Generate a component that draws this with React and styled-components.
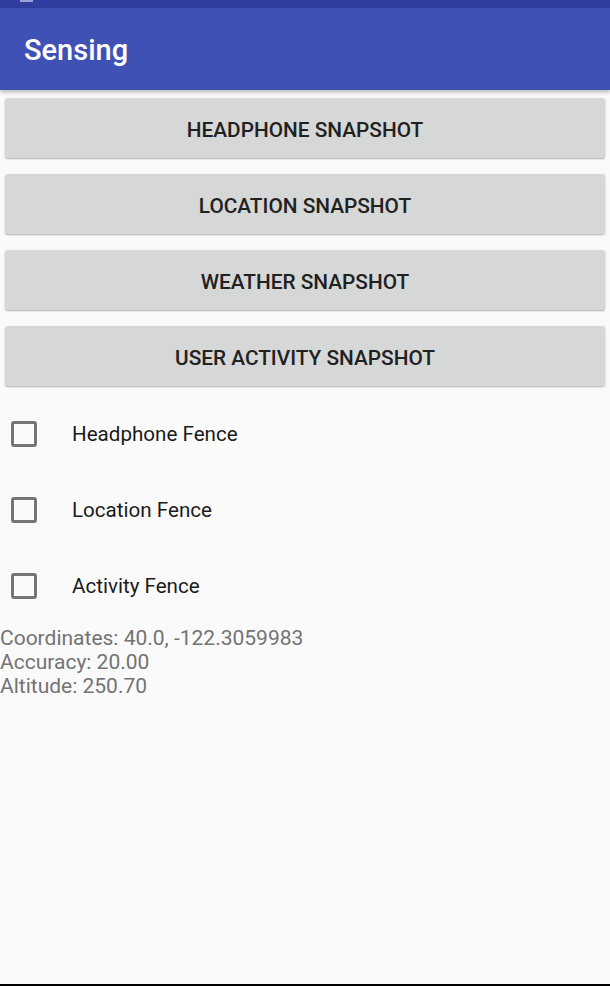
import styled, { createGlobalStyle } from "styled-components";

const GlobalStyle = createGlobalStyle`
  html, body {
    margin: 0;
    padding: 0;
    background: #fafafa;
  }
  * {
    box-sizing: border-box;
  }
`;

const Screen = styled.div`
  width: 610px;
  height: 986px;
  display: flex;
  flex-direction: column;
  background: #fafafa;
  font-family: Roboto, "Liberation Sans", sans-serif;
  overflow: hidden;
`;

const StatusBar = styled.div`
  height: 8px;
  flex-shrink: 0;
  background: #303f9f;
  padding-left: 20px;
`;

const StatusIcon = styled.div`
  width: 13px;
  height: 2px;
  background: #9aa3d6;
`;

const AppBar = styled.div`
  height: 82px;
  flex-shrink: 0;
  display: flex;
  align-items: center;
  padding-left: 24px;
  padding-top: 2px;
  background: #3f51b5;
  box-shadow: 0 2px 4px rgba(0, 0, 0, 0.28);
  position: relative;
  z-index: 1;
`;

const Title = styled.h1`
  margin: 0;
  font-size: 29px;
  font-weight: 500;
  color: #ffffff;
`;

const Content = styled.div`
  flex: 1;
  display: flex;
  flex-direction: column;
`;

const ButtonList = styled.div`
  display: flex;
  flex-direction: column;
  gap: 16px;
  padding: 8px 5px 0 5px;
`;

const SnapButton = styled.button`
  height: 60px;
  width: 100%;
  border: none;
  border-radius: 3px;
  background: #d6d7d7;
  box-shadow: 0 1px 2px rgba(0, 0, 0, 0.3);
  font-family: Roboto, "Liberation Sans", sans-serif;
  font-size: 20.8px;
  font-weight: 500;
  color: #212121;
  padding: 3px 0 0 0;
`;

const FenceList = styled.div`
  display: flex;
  flex-direction: column;
  margin-top: 10px;
`;

const FenceRow = styled.label`
  height: 76px;
  display: flex;
  align-items: center;
  padding-left: 11px;
`;

const Box = styled.span`
  width: 26px;
  height: 26px;
  border: 3px solid #757575;
  border-radius: 3px;
  flex-shrink: 0;
`;

const FenceLabel = styled.span`
  margin-left: 35px;
  font-size: 20.6px;
  color: #1a1a1a;
`;

const Info = styled.div`
  padding-top: 2px;
  font-size: 21px;
  line-height: 24px;
  color: #737373;
`;

const BottomEdge = styled.div`
  height: 2px;
  flex-shrink: 0;
  background: #000;
`;

const snapshots = [
  "HEADPHONE SNAPSHOT",
  "LOCATION SNAPSHOT",
  "WEATHER SNAPSHOT",
  "USER ACTIVITY SNAPSHOT",
];

const fences = ["Headphone Fence", "Location Fence", "Activity Fence"];

const App = () => {
  return (
    <>
      <GlobalStyle />
      <Screen>
        <StatusBar>
          <StatusIcon />
        </StatusBar>
        <AppBar>
          <Title>Sensing</Title>
        </AppBar>
        <Content>
          <ButtonList>
            {snapshots.map((s) => (
              <SnapButton key={s}>{s}</SnapButton>
            ))}
          </ButtonList>
          <FenceList>
            {fences.map((f) => (
              <FenceRow key={f}>
                <Box />
                <FenceLabel>{f}</FenceLabel>
              </FenceRow>
            ))}
          </FenceList>
          <Info>
            Coordinates: 40.0, -122.3059983
            <br />
            Accuracy: 20.00
            <br />
            Altitude: 250.70
          </Info>
        </Content>
        <BottomEdge />
      </Screen>
    </>
  );
};

export default App;
